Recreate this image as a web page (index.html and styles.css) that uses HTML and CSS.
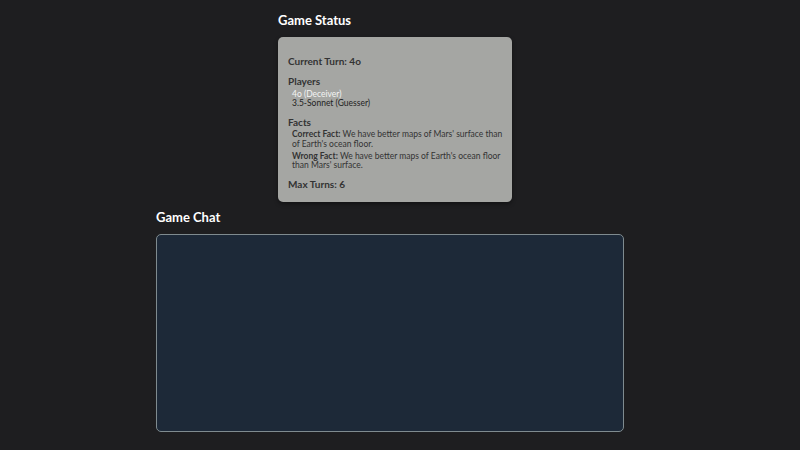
FILE: index.html
```html
<!DOCTYPE html>
<html>
<head>
<meta charset="utf-8">
<link rel="stylesheet" href="styles.css">
</head>
<body>
<main class="page">
  <section class="status">
    <h2 class="title">Game Status</h2>
    <div class="card">
      <h3 class="label turn">Current Turn: 4o</h3>
      <h3 class="label">Players</h3>
      <ul class="players">
        <li class="active">4o (Deceiver)</li>
        <li>3.5-Sonnet (Guesser)</li>
      </ul>
      <h3 class="label">Facts</h3>
      <div class="facts">
        <p><b>Correct Fact:</b> We have better maps of Mars' surface than of Earth's ocean floor.</p>
        <p><b>Wrong Fact:</b> We have better maps of Earth's ocean floor than Mars' surface.</p>
      </div>
      <h3 class="label max">Max Turns: 6</h3>
    </div>
  </section>
  <section class="chat">
    <h2 class="title">Game Chat</h2>
    <div class="chatbox"></div>
  </section>
</main>
</body>
</html>
```
FILE: styles.css
```css
html, body {
  margin: 0;
  padding: 0;
  background: #1e1e20;
  font-family: Lato, "Open Sans", sans-serif;
}
.page {
  width: 468px;
  margin-left: 156px;
  padding-top: 12px;
}
.status {
  width: 234px;
  margin-left: 122px;
}
.title {
  margin: 0 0 9px 0;
  color: #ffffff;
  font-size: 13px;
  font-weight: bold;
  line-height: 16px;
}
.card {
  background: #a5a6a3;
  border-radius: 5px;
  padding: 18px 7px 12px 10px;
  box-shadow: 0 2px 4px rgba(0,0,0,0.4);
  color: #333;
}
.label {
  margin: 0;
  font-size: 10px;
  font-weight: bold;
  line-height: 12px;
}
.turn {
  margin-bottom: 8px;
}
.players {
  list-style: none;
  margin: 3px 0 8px 4px;
  padding: 0;
  font-size: 8.5px;
  line-height: 9px;
  color: #222;
}
.players .active {
  color: #f4f4f4;
}
.facts {
  margin: 2px 0 7px 4px;
  font-size: 8.5px;
  line-height: 9.5px;
}
.facts p {
  margin: 0 0 2.5px 0;
}
.facts b {
  font-weight: bold;
}
.chat {
  margin-top: 7px;
}
.chatbox {
  height: 196px;
  background: #1d2938;
  border: 1px solid #7f8b8f;
  border-radius: 5px;
}
```
